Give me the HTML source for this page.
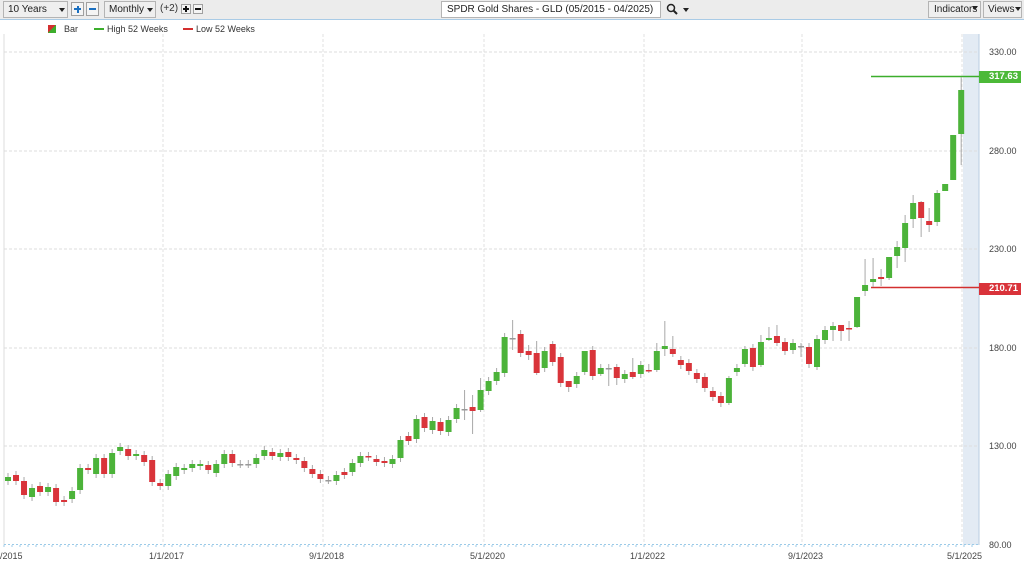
<!DOCTYPE html>
<html><head><meta charset="utf-8">
<style>
*{margin:0;padding:0;box-sizing:border-box}
body{width:1024px;height:567px;overflow:hidden;background:#fff;font-family:"Liberation Sans",sans-serif;position:relative}
#tb{position:absolute;left:0;top:0;width:1024px;height:20px;background:#ececec;border-bottom:1px solid #a9cbe6}
.box{position:absolute;top:1px;height:17px;border:1px solid #b4b4b4;background:#efefef;font-size:10px;line-height:15px;padding-left:4px;color:#222;white-space:nowrap;overflow:hidden}
.sq{position:absolute;top:2px;width:13px;height:14px;border:1px solid #a0a0a0;background:#f4f4f4}
.tri{position:absolute;width:0;height:0;border-left:3px solid transparent;border-right:3px solid transparent;border-top:4px solid #222}
.lg{position:absolute;top:24px;font-size:9px;color:#333;white-space:nowrap}
.ax{position:absolute;font-size:9px;color:#444;white-space:nowrap}
</style></head><body>
<div id="tb">
 <div class="box" style="left:3px;width:65px">10 Years<div class="tri" style="left:55px;top:6px"></div></div>
 <div class="sq" style="left:71px"><div style="position:absolute;left:2px;top:5px;width:7px;height:2px;background:#1a6fc0"></div><div style="position:absolute;left:4.5px;top:2.5px;width:2px;height:7px;background:#1a6fc0"></div></div>
 <div class="sq" style="left:86px"><div style="position:absolute;left:2px;top:5px;width:7px;height:2px;background:#1a6fc0"></div></div>
 <div class="box" style="left:104px;width:52px">Monthly<div class="tri" style="left:42px;top:6px"></div></div>
 <div style="position:absolute;left:160px;top:3px;font-size:10px;color:#333">(+2)</div>
 <div class="sq" style="left:181px;top:4px;width:10px;height:10px"><div style="position:absolute;left:1px;top:3px;width:6px;height:2px;background:#111"></div><div style="position:absolute;left:3px;top:1px;width:2px;height:6px;background:#111"></div></div>
 <div class="sq" style="left:193px;top:4px;width:10px;height:10px"><div style="position:absolute;left:1px;top:3px;width:6px;height:2px;background:#111"></div></div>
 <div class="box" style="left:441px;width:220px;background:#fff;font-size:10px;padding-left:5px">SPDR Gold Shares - GLD (05/2015 - 04/2025)</div>
 <svg style="position:absolute;left:666px;top:3px" width="24" height="13"><circle cx="5" cy="5" r="3.5" fill="none" stroke="#222" stroke-width="1.5"/><line x1="7.5" y1="7.5" x2="11" y2="11" stroke="#222" stroke-width="2"/><path d="M17 5h6l-3 4z" fill="#222"/></svg>
 <div class="box" style="left:928px;width:53px;padding-left:5px">Indicators<div class="tri" style="left:43px;top:4px"></div></div>
 <div class="box" style="left:983px;width:39px;padding-left:4px">Views<div class="tri" style="left:31px;top:5px"></div></div>
</div>
<div class="lg" style="left:48px;top:25px;width:8px;height:8px;background:linear-gradient(135deg,#d32f2f 50%,#3cae2c 50%)"></div>
<div class="lg" style="left:64px">Bar</div>
<div style="position:absolute;left:94px;top:28px;width:10px;height:2px;background:#3cae2c"></div>
<div class="lg" style="left:107px">High 52 Weeks</div>
<div style="position:absolute;left:183px;top:28px;width:10px;height:2px;background:#d32f2f"></div>
<div class="lg" style="left:196px">Low 52 Weeks</div>
<svg id="ch" style="position:absolute;left:0;top:0" width="1024" height="567"></svg>
<div class="ax" style="left:989px;top:47px">330.00</div>
<div class="ax" style="left:989px;top:146px">280.00</div>
<div class="ax" style="left:989px;top:244px">230.00</div>
<div class="ax" style="left:989px;top:343px">180.00</div>
<div class="ax" style="left:989px;top:441px">130.00</div>
<div class="ax" style="left:989px;top:540px">80.00</div>
<div style="position:absolute;left:979px;top:71px;width:42px;height:12px;background:#4cb938;color:#fff;font-size:9.5px;font-weight:bold;line-height:12px;text-align:right;padding-right:3px">317.63</div>
<div style="position:absolute;left:979px;top:283px;width:42px;height:12px;background:#d9333a;color:#fff;font-size:9.5px;font-weight:bold;line-height:12px;text-align:right;padding-right:3px">210.71</div>
<div class="ax" style="left:0;top:551px">/2015</div>
<div class="ax" style="left:149px;top:551px">1/1/2017</div>
<div class="ax" style="left:309px;top:551px">9/1/2018</div>
<div class="ax" style="left:470px;top:551px">5/1/2020</div>
<div class="ax" style="left:630px;top:551px">1/1/2022</div>
<div class="ax" style="left:788px;top:551px">9/1/2023</div>
<div class="ax" style="left:947px;top:551px">5/1/2025</div>
<script>
var d=[[477,481,'g'],[475,481,'r'],[481,495,'r'],[488,497,'g'],[486,492,'r'],[487,492,'g'],[488,502,'r'],[500,502,'r'],[491,499,'g'],[468,490,'g'],
[468,470,'r'],[458,474,'g'],[458,474,'r'],[453,474,'g'],[447,451,'g'],[449,456,'r'],[454,456,'g'],[455,462,'r'],[460,482,'r'],[483,486,'r'],
[474,486,'g'],[467,476,'g'],[468,470,'g'],[464,468,'g'],[464,466,'g'],[465,470,'r'],[464,473,'g'],[454,464,'g'],[454,463,'r'],[464,464,'f'],
[464,464,'f'],[458,464,'g'],[450,456,'g'],[452,456,'r'],[453,457,'g'],[452,457,'r'],[458,460,'r'],[461,468,'r'],[469,474,'r'],[474,479,'r'],
[480,480,'f'],[475,481,'g'],[472,475,'r'],[463,472,'g'],[456,463,'g'],[456,457,'r'],[459,462,'r'],[461,463,'r'],[459,464,'g'],[440,458,'g'],
[436,441,'r'],[419,439,'g'],[417,428,'r'],[421,430,'g'],[422,431,'r'],[420,432,'g'],[408,419,'g'],[409,409,'f',390,420],[407,411,'r',395,434],[390,410,'g',378,412],
[381,391,'g'],[372,381,'g'],[337,373,'g'],[338,338,'f',320,350],[334,353,'r'],[351,355,'r',345,360],[353,373,'r',341,375],[351,368,'g'],[344,362,'r',341,366],[357,383,'r'],
[381,387,'r',381,392],[376,384,'g'],[351,372,'g',351,375],[350,376,'r'],[368,374,'g',364,376],[368,368,'f',364,386],[367,378,'r',364,385],[374,379,'g'],[372,377,'r',358,379],[365,374,'g'],
[370,371,'r',364,373],[351,370,'g',343,372],[346,349,'g',321,356],[349,354,'r',336,357],[360,365,'r'],[363,371,'r'],[373,379,'r'],[377,388,'r'],[391,397,'r'],[396,403,'r'],
[378,403,'g',376,405],[368,372,'g'],[349,364,'g',346,367],[348,367,'r'],[342,365,'g',335,367],[338,340,'g',327,341],[336,343,'r',325,346],[342,351,'r'],[343,350,'g'],[346,346,'f',343,357],
[347,364,'r'],[339,367,'g',335,370],[330,340,'g'],[326,330,'g',322,341],[325,331,'r',325,341],[328,329,'r',321,341],[297,327,'g',297,328],[285,291,'g',259,296],[279,282,'g',258,287],[277,279,'r',269,286],
[257,278,'g',257,280],[247,256,'g',241,268],[223,248,'g',215,262],[203,219,'g',195,228],[202,218,'r',201,237],[221,225,'r',208,232],[193,222,'g',190,226],[184,191,'g',184,191],[135,180,'g',166,180],[90,134,'g',77,165]];
var s='';
s+='<rect x="963" y="34" width="16" height="511" fill="#e3ebf4"/>';
s+='<line x1="979" y1="34" x2="979" y2="545" stroke="#b8cde2"/>';
[52,151,249,348,446].forEach(function(y){s+='<line x1="4" y1="'+y+'" x2="979" y2="'+y+'" stroke="#dedede" stroke-dasharray="3,2"/>';});
[163,323,484,644,802,962].forEach(function(x){s+='<line x1="'+x+'" y1="34" x2="'+x+'" y2="545" stroke="#e0e0e0" stroke-dasharray="3,2"/>';});
s+='<line x1="4" y1="34" x2="4" y2="545" stroke="#dcdcdc"/>';
s+='<line x1="4" y1="544.5" x2="979" y2="544.5" stroke="#9ccbe8" stroke-dasharray="2,2"/>';
for(var x=4;x<979;x+=8)s+='<line x1="'+x+'" y1="545" x2="'+x+'" y2="547" stroke="#9ccbe8"/>';
s+='<line x1="871" y1="76.5" x2="979" y2="76.5" stroke="#3cae2c" stroke-width="1.5"/>';
s+='<line x1="871" y1="287.5" x2="979" y2="287.5" stroke="#d32f2f" stroke-width="1.5"/>';
d.forEach(function(c,i){
 var x=8+i*8.01,t=c[0],b=c[1];
 var wt=c[3]!=null?c[3]:t-4,wb=c[4]!=null?c[4]:b+4;
 s+='<line x1="'+x+'" y1="'+wt+'" x2="'+x+'" y2="'+wb+'" stroke="#a8a8a8"/>';
 var col=c[2]=='g'?'#4cb33a':c[2]=='r'?'#d9343a':'#999';
 var h=Math.max(b-t,1.5);
 s+='<rect x="'+(x-3)+'" y="'+t+'" width="6" height="'+h+'" fill="'+col+'"/>';
});
document.getElementById('ch').innerHTML=s;
</script>
</body></html>
